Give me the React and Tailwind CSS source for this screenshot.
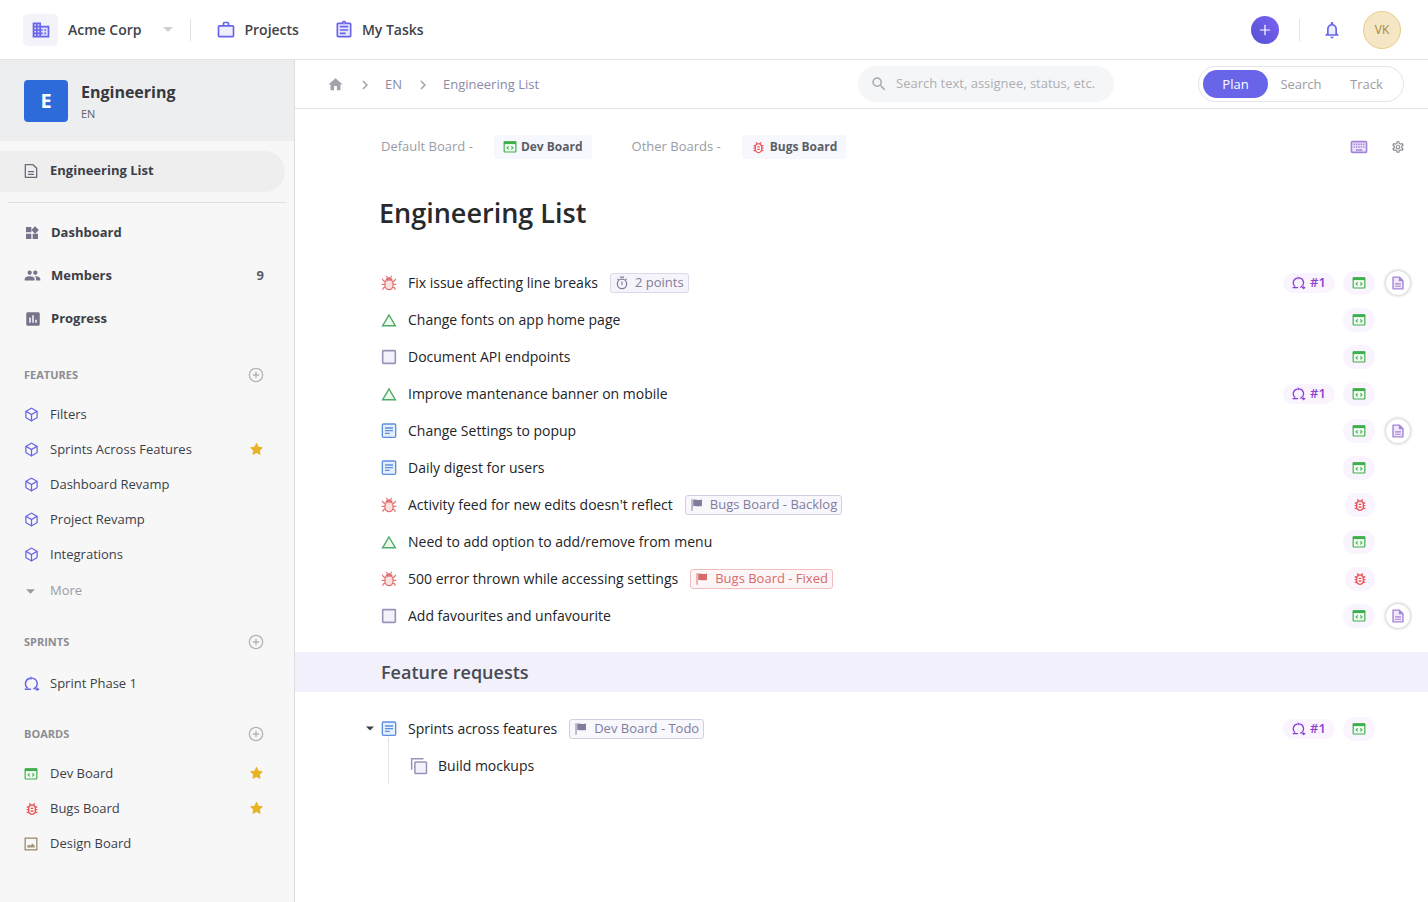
import React from "react";
import {
  MdHome, MdChevronRight, MdSearch, MdWidgets, MdPeople,
  MdOutlineSettings, MdOutlineBugReport, MdAssessment,
} from "react-icons/md";
import { AiFillStar } from "react-icons/ai";
import { FiBox } from "react-icons/fi";
import { CirclePlus, Plus } from "lucide-react";

const Svg = ({ size = 16, className = "", children }) => (
  <svg width={size} height={size} viewBox="0 0 24 24" fill="none" aria-hidden="true" className={`shrink-0 ${className}`}>
    {children}
  </svg>
);

const BuildingIcon = () => (
  <Svg size={20} className="text-[#6865e8]">
    <path d="M3 4h8v4h10v12H3z" fill="#dddbfb" />
    <path d="M12 7V3H2v18h20V7H12zM6 19H4v-2h2v2zm0-4H4v-2h2v2zm0-4H4V9h2v2zm0-4H4V5h2v2zm4 12H8v-2h2v2zm0-4H8v-2h2v2zm0-4H8V9h2v2zm0-4H8V5h2v2zm10 12h-8v-2h2v-2h-2v-2h2v-2h-2V9h8v10zm-2-8h-2v2h2v-2zm0 4h-2v2h2v-2z" fill="currentColor" />
  </Svg>
);

const BriefcaseIcon = () => (
  <Svg size={20} className="text-[#6865e8]">
    <path d="M3.5 7.500h17v12.500h-17z" fill="#efeefe" />
    <path d="M14 6V4h-4v2h4zM4 8v11h16V8H4zm16-2c1.110 0 2 .890 2 2v11c0 1.110-.890 2-2 2H4c-1.110 0-2-.890-2-2l.010-11c0-1.110.880-2 1.990-2h4V4c0-1.110.890-2 2-2h4c1.110 0 2 .890 2 2v2h4z" fill="currentColor" />
  </Svg>
);

const ClipboardIcon = () => (
  <Svg size={20} className="text-[#6865e8]">
    <path d="M4 4h16v16H4z" fill="#e9e8fd" />
    <path d="M7 15h7v2H7zm0-4h10v2H7zm0-4h10v2H7z" fill="currentColor" />
    <path d="M19 3h-4.180C14.400 1.840 13.300 1 12 1s-2.400.840-2.820 2H5c-1.100 0-2 .900-2 2v14c0 1.100.900 2 2 2h14c1.100 0 2-.900 2-2V5c0-1.100-.900-2-2-2zm-7-.250c.410 0 .750.340.750.750s-.340.750-.750.750-.750-.340-.750-.750.340-.750.750-.750zM19 19H5V5h14v14z" fill="currentColor" />
  </Svg>
);

const BellIcon = () => (
  <Svg size={20} className="text-[#6865e8]">
    <path d="M12 5.500c-3 0-5 2.200-5 5.500v7h10v-7c0-3.300-2-5.500-5-5.500z" fill="#eeedfe" />
    <path d="M12 22c1.100 0 2-.900 2-2h-4c0 1.100.900 2 2 2zm6-6v-5c0-3.070-1.630-5.640-4.500-6.320V4c0-.830-.670-1.500-1.500-1.500s-1.500.670-1.500 1.500v.680C7.640 5.360 6 7.920 6 11v5l-2 2v1h16v-1l-2-2zm-2 1H8v-6c0-2.480 1.510-4.500 4-4.500s4 2.020 4 4.500v6z" fill="currentColor" />
  </Svg>
);

const PageIcon = () => (
  <Svg size={16} className="text-[#6c6a7c]">
    <path d="M3.500 2.500h11.500l5.500 5.500v13.500h-17z" stroke="currentColor" strokeWidth="2" strokeLinejoin="round" />
    <path d="M7.500 13h9M7.500 17h9" stroke="currentColor" strokeWidth="2" />
  </Svg>
);

const SprintIcon = ({ size = 16, className = "" }) => (
  <Svg size={size} className={className}>
    <path d="M1 20h9.500M5.500 18.300A8.300 8.300 0 0 1 9 3.500M12.500 3.200a8.300 8.300 0 0 1 3.500 15.200l-2 1M17 20h3" stroke="currentColor" strokeWidth="2.200" />
    <path d="M9.500 .500l4 2.800-4 2.800zM19 17l4.500 3-4.500 3z" fill="currentColor" />
  </Svg>
);

const CodeBoardIcon = ({ size = 14 }) => (
  <Svg size={size} className="text-[#3fae4c]">
    <rect x="2" y="3" width="20" height="17.500" rx="1" fill="#f0fbf1" stroke="currentColor" strokeWidth="2" />
    <path d="M1.500 2.500h21V7h-21z" fill="currentColor" />
    <path d="M9.800 10.800 7 13.400l2.800 2.600M14.200 10.800l2.800 2.600-2.800 2.600" stroke="currentColor" strokeWidth="1.800" />
  </Svg>
);

const ImageIcon = () => (
  <Svg size={14} className="text-[#a1937a]">
    <rect x="2" y="2" width="20" height="20" stroke="currentColor" strokeWidth="2.400" />
    <path d="M5.500 18v-2.500l3-2.500 2.500 2 3.500-4 4 4.500V18z" fill="currentColor" />
  </Svg>
);

const KeyboardIcon = () => (
  <Svg size={20} className="text-[#a184d8]">
    <rect x="3" y="5.500" width="18" height="13" rx="1" fill="#f1eafc" stroke="currentColor" strokeWidth="2" />
    <path d="M5.500 8.800h13M5.500 12h13" stroke="currentColor" strokeWidth="2" strokeDasharray="1.800 1" />
    <path d="M8 15.600h8" stroke="currentColor" strokeWidth="1.800" />
  </Svg>
);

const DocIcon = () => (
  <Svg size={14} className="text-[#a384d8]">
    <path d="M3.500 2h11L20.500 8v14h-17z" fill="#f0e9fb" stroke="currentColor" strokeWidth="2.400" strokeLinejoin="round" />
    <path d="M13.500 2v7H21z" fill="currentColor" />
    <path d="M7 13.500h10M7 17.500h10" stroke="currentColor" strokeWidth="2" />
  </Svg>
);

const FlagIcon = () => (
  <Svg size={14}>
    <path d="M3.500 2v20" stroke="currentColor" strokeWidth="1.600" />
    <path d="M5.500 3c3-1.500 5.500.500 8 .500s4-.500 7-1v11c-3 .800-5 1-7.500.700s-4.500-1.200-7.500-.200z" fill="currentColor" />
  </Svg>
);

const TimerIcon = () => (
  <Svg size={14}>
    <circle cx="12" cy="13.500" r="8" stroke="currentColor" strokeWidth="2.200" />
    <path d="M8.500 2h7M12 9.500v6M18 6.500l1.800-1.800M6 6.500 4.200 4.700" stroke="currentColor" strokeWidth="2" />
  </Svg>
);

const taskIcons = {
  bug: (
    <Svg size={16} className="text-[#e37373]">
      <path d="M7 10 3.500 8.500 2 5.500M17 10l3.500-1.500 1.500-3M6 14H1M18 14h5M7 18l-3.500 1.500L2.500 22M17 18l3.500 1.500 1 2.500" stroke="currentColor" strokeWidth="1.800" />
      <ellipse cx="12" cy="14.500" rx="6.200" ry="7.500" fill="#fbe0e0" stroke="currentColor" strokeWidth="2" />
      <path d="M7.500 7.500C8 5.500 9.500 4 12 4s4 1.500 4.500 3.500zM8 1l1.800 3.500M16 1l-1.800 3.500" fill="currentColor" stroke="currentColor" strokeWidth="1.600" />
    </Svg>
  ),
  feature: (
    <Svg size={16} className="text-[#4fac68]">
      <path d="M12 4.500 21.500 20.500h-19z" fill="#edf8ef" stroke="currentColor" strokeWidth="2.200" />
    </Svg>
  ),
  task: (
    <Svg size={16} className="text-[#9b92b8]">
      <rect x="2.500" y="2.500" width="19" height="19" rx="1" fill="#f3f1f9" stroke="currentColor" strokeWidth="2.400" />
    </Svg>
  ),
  story: (
    <Svg size={16} className="text-[#5c90dc]">
      <rect x="2" y="1.500" width="20" height="20" rx="1.500" fill="#e4eefc" stroke="currentColor" strokeWidth="2" />
      <path d="M6 7.500h12M6 11.500h12M6 15.500h7" stroke="currentColor" strokeWidth="2" />
    </Svg>
  ),
  subtask: (
    <Svg size={18} className="text-[#9b92b8]">
      <path d="M2.200 17V2.200H18" stroke="currentColor" strokeWidth="2" />
      <rect x="6.500" y="6.500" width="15.500" height="15.500" rx="1" fill="#f3f1f9" stroke="currentColor" strokeWidth="2" />
    </Svg>
  ),
};

const Caret = ({ className }) => (
  <svg width="10" height="5" viewBox="0 0 10 5" aria-hidden="true" className={`shrink-0 ${className}`}>
    <path d="M0 0h10L5 5z" fill="currentColor" />
  </svg>
);

const boardIcons = {
  dev: <CodeBoardIcon />,
  bugs: <MdOutlineBugReport size={16} className="shrink-0 text-[#ea5455]" />,
  design: <ImageIcon />,
};

function SideHeading({ children }) {
  return (
    <div className="flex h-4 items-center justify-between pl-6 pr-[30px]">
      <h2 className="text-[11px] font-bold text-[#8b8d93]">{children}</h2>
      <button type="button" aria-label={`Add to ${children}`} className="text-[#b0b3b8]">
        <CirclePlus size={16} strokeWidth={2} />
      </button>
    </div>
  );
}

function SideItem({ icon, label, starred }) {
  return (
    <li>
      <a href="#" className="flex h-[35px] items-center pl-6 pr-[30px] text-[13px] font-medium text-[#3b3f48]">
        <span className="flex w-[26px] items-center text-[#6865e8]">{icon}</span>
        <span className="flex-1">{label}</span>
        {starred && <AiFillStar size={15} className="text-[#e8b424]" />}
      </a>
    </li>
  );
}

function NavItem({ icon, label, count }) {
  return (
    <li>
      <a href="#" className="flex h-[43px] items-center pl-6 pr-[30px] text-[13px] font-bold text-[#3b3f48]">
        <span className="flex w-[27px] items-center text-[#77738a]">{icon}</span>
        <span className="flex-1">{label}</span>
        {count && <span className="text-[#5b5e66]">{count}</span>}
      </a>
    </li>
  );
}

const chipStyles = {
  muted: "border-[#d3cfe2] bg-[#f8f7fc] text-[#827c9c]",
  points: "border-[#dbd8ea] bg-[#f5f4fa] text-[#827c9c]",
  red: "border-[#f3bcbc] bg-[#fef6f6] text-[#d66a6a]",
};

function Chip({ tone, children }) {
  return (
    <span className={`flex h-5 items-center gap-[6px] rounded-[3px] border px-1 text-[13px] font-medium ${chipStyles[tone]}`}>
      {tone === "points" ? <TimerIcon /> : <FlagIcon />}
      {children}
    </span>
  );
}

function TaskBody({ type, title, chip, board, sprint, doc, caret }) {
  return (
    <div className="flex h-[37px] items-center pl-16 pr-[17px]">
      <span className="flex w-[22px] justify-center">
        {caret && (
          <button type="button" aria-label="Collapse subtasks" className="py-1 text-[#3b3f48]">
            <Caret className="w-2" />
          </button>
        )}
      </span>
      <span className="flex w-[27px]">{taskIcons[type]}</span>
      <span className="text-[14px] text-[#222428]">{title}</span>
      {chip && <span className="ml-3"><Chip tone={chip[0]}>{chip[1]}</Chip></span>}
      <span className="flex-1" />
      {sprint && (
        <a href="#" className="mr-2 flex h-5 w-[52px] items-center justify-center gap-1 rounded-full bg-[#f9f4fe] text-[13px] font-semibold text-[#8a3fd1]">
          <SprintIcon size={14} />#1
        </a>
      )}
      {board && (
        <a href="#" aria-label={`Open ${board} board`} className={`flex h-6 items-center justify-center rounded-full bg-[#f9f4fe] ${board === "bugs" ? "px-[7px]" : "px-[9px]"}`}>
          {boardIcons[board]}
        </a>
      )}
      <span className="ml-[10px] flex w-[26px] justify-center">
        {doc && (
          <button type="button" aria-label="Open document" className="flex size-6 items-center justify-center rounded-full bg-white shadow-[0_0_3px_1px_rgba(0,0,0,0.2)]">
            <DocIcon />
          </button>
        )}
      </span>
    </div>
  );
}

const tasks = [
  { type: "bug", title: "Fix issue affecting line breaks", chip: ["points", "2 points"], sprint: true, board: "dev", doc: true },
  { type: "feature", title: "Change fonts on app home page", board: "dev" },
  { type: "task", title: "Document API endpoints", board: "dev" },
  { type: "feature", title: "Improve mantenance banner on mobile", sprint: true, board: "dev" },
  { type: "story", title: "Change Settings to popup", board: "dev", doc: true },
  { type: "story", title: "Daily digest for users", board: "dev" },
  { type: "bug", title: "Activity feed for new edits doesn't reflect", chip: ["muted", "Bugs Board - Backlog"], board: "bugs" },
  { type: "feature", title: "Need to add option to add/remove from menu", board: "dev" },
  { type: "bug", title: "500 error thrown while accessing settings", chip: ["red", "Bugs Board - Fixed"], board: "bugs" },
  { type: "task", title: "Add favourites and unfavourite", board: "dev", doc: true },
];

function TopBar() {
  return (
    <header className="flex h-[60px] items-center border-b border-[#e2e2e4] pl-[23px] pr-[27px] text-[14px] font-semibold text-[#3f434b]">
      <button type="button" className="flex items-center">
        <span className="mr-[10px] flex h-8 w-[35px] items-center justify-center rounded-[5px] bg-[#f4f3f9]"><BuildingIcon /></span>
        Acme Corp
        <Caret className="ml-[22px] text-[#cfd0d6]" />
      </button>
      <span className="ml-[17px] h-[22px] w-px bg-[#e2e2e4]" />
      <nav className="flex gap-[35px] pl-[25px]">
        <a href="#" className="flex items-center gap-2"><BriefcaseIcon />Projects</a>
        <a href="#" className="flex items-center gap-2"><ClipboardIcon />My Tasks</a>
      </nav>
      <div className="ml-auto flex items-center">
        <button type="button" aria-label="Create" className="flex size-7 items-center justify-center rounded-full bg-linear-to-tr from-[#5552d0] to-[#7b61f5] text-white">
          <Plus size={16} strokeWidth={1.8} />
        </button>
        <span className="ml-5 h-[22px] w-px bg-[#e2e2e4]" />
        <button type="button" aria-label="Notifications" className="ml-[22px]"><BellIcon /></button>
        <button type="button" aria-label="Account" className="ml-[21px] flex size-[38px] items-center justify-center rounded-full border border-[#e8cd82] bg-[#f5e6c6] text-[12px] font-medium text-[#a8883a]">VK</button>
      </div>
    </header>
  );
}

function Sidebar() {
  return (
    <aside className="w-[295px] shrink-0 border-r border-[#dddde0] bg-[#f7f7f7]">
      <div className="flex h-[81px] items-center bg-[#edeef0] pl-6">
        <span className="flex h-[42px] w-11 items-center justify-center rounded bg-[#2c6bd9] text-[20px] font-bold text-white">E</span>
        <div className="pl-[13px] pt-[2px]">
          <p className="text-[16px] leading-6 font-bold text-[#37393e]">Engineering</p>
          <p className="text-[11px] leading-5 font-medium text-[#5f626a]">EN</p>
        </div>
      </div>
      <a href="#" className="mr-[9px] mt-[10px] flex h-[41px] items-center rounded-r-full bg-[#eeeeee] pb-[2px] pl-[23px] text-[13px] font-bold text-[#3b3f48]">
        <span className="w-[27px]"><PageIcon /></span>
        Engineering List
      </a>
      <hr className="mx-2 mt-[10px] border-[#e0e0e2]" />
      <ul className="mt-2">
        <NavItem icon={<MdWidgets size={16} />} label="Dashboard" />
        <NavItem icon={<MdPeople size={17} />} label="Members" count="9" />
        <NavItem icon={<MdAssessment size={18} />} label="Progress" />
      </ul>
      <div className="mt-[27px]"><SideHeading>FEATURES</SideHeading></div>
      <ul className="mt-[14px]">
        <SideItem icon={<FiBox size={15} />} label="Filters" />
        <SideItem icon={<FiBox size={15} />} label="Sprints Across Features" starred />
        <SideItem icon={<FiBox size={15} />} label="Dashboard Revamp" />
        <SideItem icon={<FiBox size={15} />} label="Project Revamp" />
        <SideItem icon={<FiBox size={15} />} label="Integrations" />
      </ul>
      <button type="button" className="flex h-[38px] items-center pl-[26px] text-[13px] text-[#9a9ca4]">
        <span className="w-6"><Caret className="w-[9px] text-[#9a9ca4]" /></span>
        More
      </button>
      <div className="mt-6"><SideHeading>SPRINTS</SideHeading></div>
      <ul className="mt-4">
        <SideItem icon={<SprintIcon />} label="Sprint Phase 1" />
      </ul>
      <div className="mt-[25px]"><SideHeading>BOARDS</SideHeading></div>
      <ul className="mt-[14px]">
        <SideItem icon={boardIcons.dev} label="Dev Board" starred />
        <SideItem icon={boardIcons.bugs} label="Bugs Board" starred />
        <SideItem icon={boardIcons.design} label="Design Board" />
      </ul>
    </aside>
  );
}

function Toolbar() {
  return (
    <div className="flex h-[49px] items-center border-b border-[#e2e2e4] pl-8 pr-6 text-[13px]">
      <nav aria-label="Breadcrumb" className="flex flex-1 items-center pt-px font-medium text-[#8b8aa8]">
        <a href="#" aria-label="Home" className="text-[#a3a4aa]"><MdHome size={17} /></a>
        <MdChevronRight size={18} className="ml-3 mr-[11px] text-[#a3a4aa]" />
        <a href="#">EN</a>
        <MdChevronRight size={18} className="ml-3 mr-[11px] text-[#a3a4aa]" />
        <a href="#">Engineering List</a>
      </nav>
      <label className="mr-[84px] flex h-9 w-64 items-center gap-2 rounded-full bg-[#f5f6f8] pl-3 text-[#a9aaae]">
        <MdSearch size={18} className="shrink-0" />
        <input type="search" aria-label="Search tasks" placeholder="Search text, assignee, status, etc." className="w-full bg-transparent outline-none placeholder:text-[#adaeb2]" />
      </label>
      <div className="flex h-9 items-center rounded-full border border-[#e4e4e7] px-1 text-[#9c9da3]">
        <button type="button" className="h-7 w-[65px] rounded-full bg-[#6865e8] pt-[2px] font-medium text-white">Plan</button>
        <button type="button" className="h-7 w-[66px] pt-[2px]">Search</button>
        <button type="button" className="h-7 w-[65px] pt-[2px]">Track</button>
      </div>
    </div>
  );
}

function BoardLink({ label, icon, name }) {
  return (
    <div className="flex items-center gap-[21px]">
      <span>{label}</span>
      <a href="#" className="flex h-6 items-center gap-1 rounded-[3px] bg-[#f7f8fd] px-[9px] text-[12px] font-bold text-[#5b5e66]">
        {icon}
        {name}
      </a>
    </div>
  );
}

export default function App() {
  return (
    <div className="flex min-h-screen flex-col bg-white font-['Open_Sans',sans-serif]">
      <TopBar />
      <div className="flex flex-1">
        <Sidebar />
        <main className="min-w-0 flex-1">
          <Toolbar />
          <div className="mt-[26px] flex h-6 items-center gap-10 pl-[86px] pr-[23px] text-[13px] text-[#9a9ca4]">
            <BoardLink label="Default Board -" icon={boardIcons.dev} name="Dev Board" />
            <BoardLink label="Other Boards -" icon={<MdOutlineBugReport size={15} className="text-[#ea5455]" />} name="Bugs Board" />
            <div className="ml-auto flex items-center gap-[22px]">
              <button type="button" aria-label="Keyboard shortcuts"><KeyboardIcon /></button>
              <button type="button" aria-label="Settings" className="text-[#8b8c90]"><MdOutlineSettings size={14} /></button>
            </div>
          </div>
          <h1 className="mt-9 pl-[84px] text-[27px] leading-9 font-semibold text-[#27292d]">Engineering List</h1>
          <ul className="mt-[33px]">
            {tasks.map((task) => (
              <li key={task.title}><TaskBody {...task} /></li>
            ))}
          </ul>
          <h2 className="mt-[18px] bg-[#f1f0fb] pl-[86px] text-[18px] leading-10 font-semibold text-[#474b53]">Feature requests</h2>
          <ul className="mt-[18px]">
            <li>
              <TaskBody type="story" title="Sprints across features" chip={["muted", "Dev Board - Todo"]} sprint board="dev" caret />
              <ul className="-mt-[10px] ml-[93px] border-l border-[#e2e2e4] pt-[10px]">
                <li className="flex h-[37px] items-center gap-[10px] pl-[21px] text-[14px] text-[#222428]">
                  {taskIcons.subtask}
                  Build mockups
                </li>
              </ul>
            </li>
          </ul>
        </main>
      </div>
    </div>
  );
}
